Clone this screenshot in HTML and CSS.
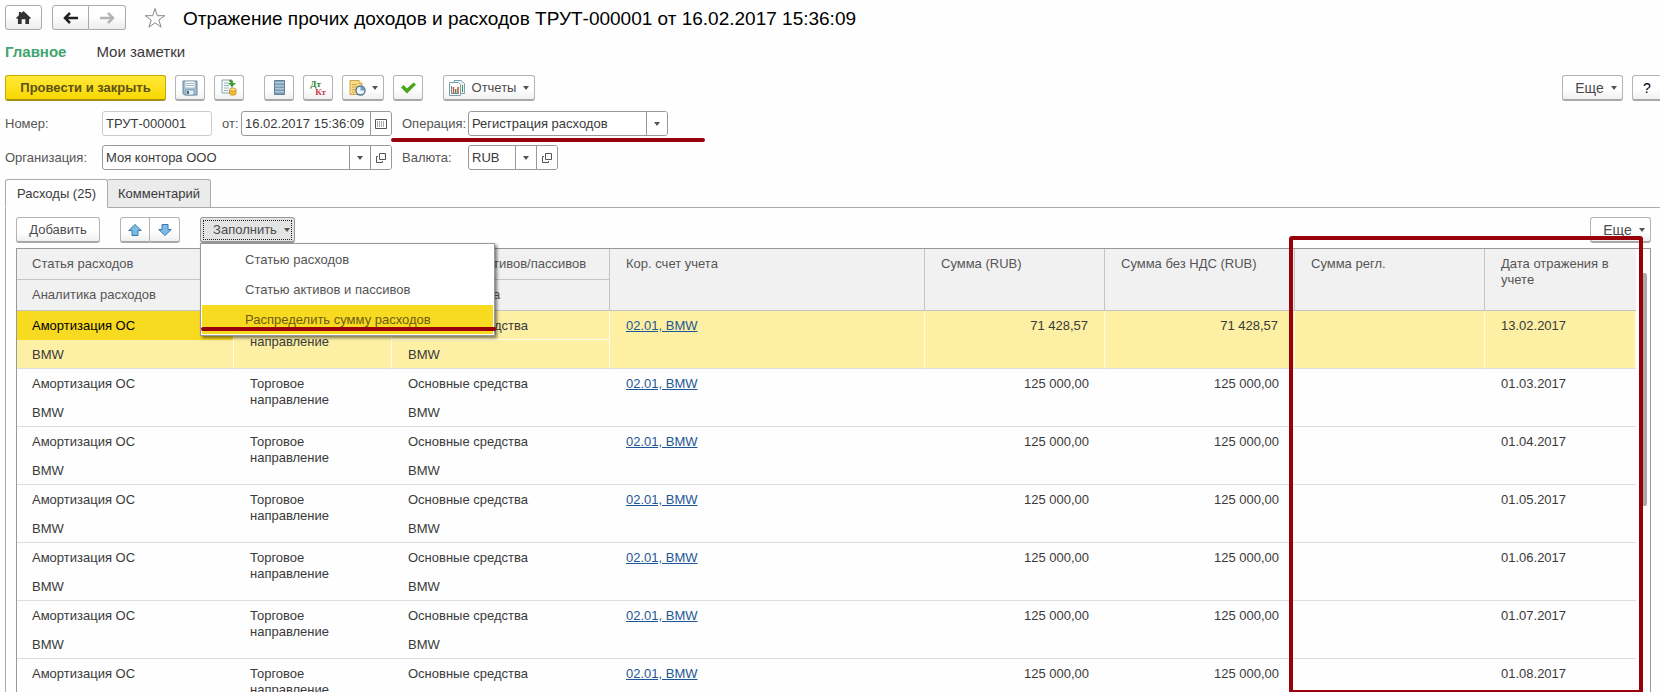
FILE: index.html
```html
<!DOCTYPE html>
<html lang="ru">
<head>
<meta charset="utf-8">
<title>Отражение прочих доходов и расходов</title>
<link rel="stylesheet" href="styles.css">
</head>
<body>
<svg class="sprite" aria-hidden="true">
  <symbol id="caret" viewBox="0 0 6 4"><path d="M0 0h6L3 4z" fill="#555"/></symbol>
  <symbol id="open" viewBox="0 0 10 10"><path d="M3.500.5h6v6h-6zM2 3.500H.5v6h6V8" fill="none" stroke="#555"/></symbol>
</svg>
<div class="app">
  <header class="titlebar">
    <button class="btn home" aria-label="Домой"><svg width="15" height="13" viewBox="0 0 16 14"><path d="M8 0l8 7.500-1 1L14 8v6h-4V9H6v5H2V8L1 8.500l-1-1L3 4.500V1h2.500v1.500z" fill="#333"/></svg></button>
    <div class="group nav">
      <button class="btn" aria-label="Назад"><svg width="15" height="12" viewBox="0 0 15 12"><path d="M15 6H3M7 1L2 6l5 5" fill="none" stroke="#222" stroke-width="2.500"/></svg></button>
      <button class="btn" aria-label="Вперед"><svg width="15" height="12" viewBox="0 0 15 12"><path d="M0 6h12M8 1l5 5-5 5" fill="none" stroke="#b4b4b4" stroke-width="2.500"/></svg></button>
    </div>
    <svg class="star" width="22" height="22" viewBox="0 0 22 22"><path d="M11 1.500l2.300 7.200h7.500l-6 4.300 2.300 7.200-6.100-4.500L4.900 20.200 7.200 13l-6-4.300h7.500z" fill="#fff" stroke="#888"/></svg>
    <h1>Отражение прочих доходов и расходов ТРУТ-000001 от 16.02.2017 15:36:09</h1>
  </header>

  <nav class="sections">
    <a class="current" href="#main">Главное</a>
    <a href="#notes">Мои заметки</a>
  </nav>

  <div class="commands">
    <button class="btn primary">Провести и закрыть</button>
    <button class="btn icon" aria-label="Записать"><svg width="16" height="16" viewBox="0 0 16 16"><path d="M1 1h14v14H2.500L1 13.500z" fill="#a4bfd0" stroke="#64869c"/><path d="M3.500 1.500h9v6h-9z" fill="#fff"/><path d="M4 3.500h8M4 5.500h8" stroke="#9bb4c4"/><path d="M4 10h8v5H4z" fill="#e3edf3" stroke="#64869c" stroke-width=".7"/><path d="M5 11h2v3H5z" fill="#466a84"/></svg></button>
    <button class="btn icon" aria-label="Провести"><svg width="16" height="17" viewBox="0 0 16 17"><path d="M1 1h10v13H1z" fill="#f8fbfc" stroke="#8aa2b0"/><path d="M3 4h4M3 6.500h5M3 9h5M3 11.500h4" stroke="#9ab0bc"/><path d="M8 .8c3 0 4.200 1 4.200 3.200H15l-4 4-4-4h2.500C9.500 3 9 2.500 8 2.500z" fill="#3e9c35"/><path d="M8.500 10.500v4c0 2.300 6.500 2.300 6.500 0v-4z" fill="#f0bd30" stroke="#b98715" stroke-width=".7"/><ellipse cx="11.800" cy="10.500" rx="3.200" ry="1.500" fill="#ffe285" stroke="#b98715" stroke-width=".7"/></svg></button>
    <button class="btn icon gap" aria-label="Движения"><svg width="11" height="15" viewBox="0 0 11 15"><path d="M.5.500h10v14H.5z" fill="#86a9c1" stroke="#5e8098"/><path d="M1 3h9M1 6h9M1 9h9M1 12h9" stroke="#d4e4ee"/><path d="M1 4h9M1 7h9M1 10h9M1 13h9" stroke="#5e8098" stroke-width=".6"/></svg></button>
    <button class="btn icon dtkt" aria-label="Дт Кт"><span class="dt">Дт</span><span class="kt">Кт</span></button>
    <button class="btn timed" aria-label="Создать на основании"><svg width="17" height="16" viewBox="0 0 17 16"><path d="M1 .5h9l3 3v11H1z" fill="#f9dd8a" stroke="#cfa64a"/><path d="M10 .5v3h3" fill="#fff3c8" stroke="#cfa64a"/><path d="M3 4.500h5M3 7h6M3 9.500h4M3 12h3" stroke="#cfa64a"/><circle cx="11.500" cy="10.500" r="4.500" fill="#eef5fb" stroke="#56748f" stroke-width="1.400"/><path d="M11.500 10.500V6.500a4 4 0 0 1 4 4z" fill="#6d9cc5"/></svg><svg class="caret"><use href="#caret"/></svg></button>
    <button class="btn icon" aria-label="Отметить"><svg width="15" height="12" viewBox="0 0 15 12"><path d="M0 5.500L2.500 3 6 6.500 12.500.5 15 2.500 6 11.500z" fill="#48a51c"/></svg></button>
    <button class="btn reports gap"><svg width="16" height="16" viewBox="0 0 16 16"><path d="M5 .5h7l3.500 3v10H5z" fill="#e9f3f5" stroke="#7ba2aa"/><path d="M.5 2.500h9l2 2v11H.5z" fill="#fff" stroke="#7ba2aa"/><path d="M2.500 6v7.500H10" fill="none" stroke="#6d8994"/><path d="M4.500 7v6" stroke="#d14c3e" stroke-width="1.500"/><path d="M6.700 9v4" stroke="#3b9a48" stroke-width="1.500"/><path d="M9 7v6" stroke="#c8473d" stroke-width="1.500"/><path d="M13.500 5v7" stroke="#3b9a48"/></svg>Отчеты<svg class="caret"><use href="#caret"/></svg></button>
    <button class="btn more push">Еще<svg class="caret"><use href="#caret"/></svg></button>
    <button class="btn icon help" aria-label="Справка">?</button>
  </div>

  <form class="fields">
    <div class="line">
      <label class="first" for="number">Номер:</label>
      <input class="box number" id="number" value="ТРУТ-000001" readonly>
      <label class="from" for="date">от:</label>
      <div class="box date"><input id="date" value="16.02.2017 15:36:09"><button type="button" aria-label="Календарь"><svg width="12" height="10" viewBox="0 0 12 10"><path d="M.5.500h11v9H.5z" fill="#fff" stroke="#555"/><path d="M2 3h8M2 5h8M2 7h8" stroke="#555" stroke-dasharray="1 1"/></svg></button></div>
      <label class="second" for="operation">Операция:</label>
      <div class="box operation"><select id="operation"><option>Регистрация расходов</option></select><span class="drop"><svg class="caret"><use href="#caret"/></svg></span></div>
    </div>
    <div class="line">
      <label class="first" for="org">Организация:</label>
      <div class="box org"><input id="org" value="Моя контора ООО"><button type="button" aria-label="Выбрать организацию"><svg class="caret"><use href="#caret"/></svg></button><button type="button" aria-label="Открыть организацию"><svg width="10" height="10"><use href="#open"/></svg></button></div>
      <label class="second" for="currency">Валюта:</label>
      <div class="box currency"><select id="currency"><option>RUB</option></select><span class="drop"><svg class="caret"><use href="#caret"/></svg></span><button type="button" aria-label="Открыть валюту"><svg width="10" height="10"><use href="#open"/></svg></button></div>
    </div>
    <div class="mark-line"></div>
  </form>

  <div class="tabs">
    <button class="tab active">Расходы (25)</button><button class="tab">Комментарий</button>
  </div>

  <main class="panel">
    <div class="commands inner">
      <button class="btn add">Добавить</button>
      <div class="group arrows">
        <button class="btn" aria-label="Вверх"><svg width="14" height="12" viewBox="0 0 14 12"><path d="M7 .5L13.300 6.500H10v5H4v-5H.7z" fill="#7cbbe8" stroke="#3a78a8"/></svg></button>
        <button class="btn" aria-label="Вниз"><svg width="14" height="12" viewBox="0 0 14 12"><path d="M7 11.500L13.300 5.500H10v-5H4v5H.7z" fill="#7cbbe8" stroke="#3a78a8"/></svg></button>
      </div>
      <div class="fill">
        <button class="btn pressed">Заполнить<svg class="caret"><use href="#caret"/></svg></button>
        <div class="menu">
          <button>Статью расходов</button>
          <button>Статью активов и пассивов</button>
          <button class="hot">Распределить сумму расходов</button>
          <div class="mark-menu"></div>
        </div>
      </div>
      <button class="btn more push">Еще<svg class="caret"><use href="#caret"/></svg></button>
    </div>

    <div class="grid">
      <div class="rows">
        <table>
          <colgroup><col class="c1"><col class="c2"><col class="c3"><col><col class="c5"><col class="c6"><col class="c7"><col class="c8"></colgroup>
          <thead>
            <tr><th>Статья расходов</th><th rowspan="2"></th><th>Кор. статья активов/пассивов</th><th rowspan="2">Кор. счет учета</th><th rowspan="2">Сумма (RUB)</th><th rowspan="2">Сумма без НДС (RUB)</th><th rowspan="2">Сумма регл.</th><th rowspan="2">Дата отражения в учете</th></tr>
            <tr><th>Аналитика расходов</th><th>Кор. аналитика</th></tr>
          </thead>
          <tbody class="selected">
            <tr><td class="cell">Амортизация ОС</td><td rowspan="2">Торговое направление</td><td class="upper">Основные средства</td><td rowspan="2"><a href="#a">02.01, BMW</a></td><td class="num" rowspan="2">71 428,57</td><td class="num" rowspan="2">71 428,57</td><td rowspan="2"></td><td rowspan="2">13.02.2017</td></tr>
            <tr><td>BMW</td><td>BMW</td></tr>
          </tbody>
          <tbody>
            <tr><td>Амортизация ОС</td><td rowspan="2">Торговое направление</td><td>Основные средства</td><td rowspan="2"><a href="#a">02.01, BMW</a></td><td class="num" rowspan="2">125 000,00</td><td class="num" rowspan="2">125 000,00</td><td rowspan="2"></td><td rowspan="2">01.03.2017</td></tr>
            <tr><td>BMW</td><td>BMW</td></tr>
          </tbody>
          <tbody>
            <tr><td>Амортизация ОС</td><td rowspan="2">Торговое направление</td><td>Основные средства</td><td rowspan="2"><a href="#a">02.01, BMW</a></td><td class="num" rowspan="2">125 000,00</td><td class="num" rowspan="2">125 000,00</td><td rowspan="2"></td><td rowspan="2">01.04.2017</td></tr>
            <tr><td>BMW</td><td>BMW</td></tr>
          </tbody>
          <tbody>
            <tr><td>Амортизация ОС</td><td rowspan="2">Торговое направление</td><td>Основные средства</td><td rowspan="2"><a href="#a">02.01, BMW</a></td><td class="num" rowspan="2">125 000,00</td><td class="num" rowspan="2">125 000,00</td><td rowspan="2"></td><td rowspan="2">01.05.2017</td></tr>
            <tr><td>BMW</td><td>BMW</td></tr>
          </tbody>
          <tbody>
            <tr><td>Амортизация ОС</td><td rowspan="2">Торговое направление</td><td>Основные средства</td><td rowspan="2"><a href="#a">02.01, BMW</a></td><td class="num" rowspan="2">125 000,00</td><td class="num" rowspan="2">125 000,00</td><td rowspan="2"></td><td rowspan="2">01.06.2017</td></tr>
            <tr><td>BMW</td><td>BMW</td></tr>
          </tbody>
          <tbody>
            <tr><td>Амортизация ОС</td><td rowspan="2">Торговое направление</td><td>Основные средства</td><td rowspan="2"><a href="#a">02.01, BMW</a></td><td class="num" rowspan="2">125 000,00</td><td class="num" rowspan="2">125 000,00</td><td rowspan="2"></td><td rowspan="2">01.07.2017</td></tr>
            <tr><td>BMW</td><td>BMW</td></tr>
          </tbody>
          <tbody>
            <tr><td>Амортизация ОС</td><td rowspan="2">Торговое направление</td><td>Основные средства</td><td rowspan="2"><a href="#a">02.01, BMW</a></td><td class="num" rowspan="2">125 000,00</td><td class="num" rowspan="2">125 000,00</td><td rowspan="2"></td><td rowspan="2">01.08.2017</td></tr>
            <tr><td></td><td></td></tr>
          </tbody>
        </table>
        <div class="scroll"><div class="thumb"></div></div>
      </div>
      <div class="mark-frame"></div>
    </div>
  </main>
</div>
</body>
</html>
```
FILE: styles.css
```css
* { box-sizing: border-box; }

body {
  margin: 0;
  background: #fefefe;
  color: #3a3a3a;
  font: 13px/16px "Liberation Sans", Arial, sans-serif;
}

button, input, select { font: inherit; color: inherit; }
.sprite { position: absolute; width: 0; height: 0; }

.app {
  display: flex;
  flex-direction: column;
  height: 100vh;
  overflow: hidden;
  padding-left: 5px;
}

/* Buttons */
.btn {
  display: flex;
  align-items: center;
  justify-content: center;
  height: 26px;
  padding: 0;
  border: 1px solid #b4b4b4;
  border-bottom: 2px solid #a8a8a8;
  border-radius: 3px;
  background: linear-gradient(#fff 55%, #f0f0f0);
  color: #4c4c4c;
}
.caret { width: 6px; height: 4px; flex: none; }
.icon { width: 30px; }
.group { display: flex; }
.group .btn:first-child { border-radius: 3px 0 0 3px; }
.group .btn:last-child { border-left: 0; border-radius: 0 3px 3px 0; }

/* Title */
.titlebar { display: flex; align-items: center; height: 25px; margin-top: 5px; }
.home { width: 37px; }
.nav { margin: 0 18px 0 10px; }
.nav .btn { width: 37px; }
.titlebar .btn { height: 25px; border: 1px solid #aaa; background: linear-gradient(#fff 40%, #ececec); }
.titlebar .nav .btn:last-child { border-left: 0; }
h1 { margin: 0 0 0 17px; color: #000; font-size: 19px; font-weight: 400; line-height: 24px; padding-top: 2px; white-space: nowrap; }

.sections { display: flex; gap: 30px; margin-top: 13px; font-size: 15px; line-height: 18px; }
.sections a { color: #3a3a3a; text-decoration: none; }
.sections .current { color: #40a56f; font-weight: 700; }

/* Commands */
.commands { display: flex; gap: 9px; margin-top: 14px; }
.commands .gap { margin-left: 11px; }
.commands .push { margin-left: auto; }
.primary {
  width: 161px;
  border-color: #c8a800;
  border-bottom-color: #a89010;
  background: linear-gradient(#ffe93a, #f8d800);
  color: #5e5114;
  font-weight: 700;
}
.dtkt { flex-direction: column; font: 700 9px/8px "Liberation Serif", serif; }
.dt { color: #2d7d2d; padding-right: 5px; }
.kt { color: #cc3c48; padding-left: 5px; }
.timed { width: 42px; gap: 6px; }
.reports { width: 92px; gap: 7px; }
.more { width: 61px; gap: 7px; padding-left: 7px; font-size: 14px; }
.help { margin-right: -2px; color: #000; font-size: 14px; }

/* Fields */
.fields { position: relative; display: flex; flex-direction: column; gap: 9px; margin-top: 10px; }
.line { display: flex; align-items: center; }
.line label { color: #555; }
.first { width: 97px; }
.from { width: 29px; padding-left: 10px; }
.second { width: 76px; padding-left: 10px; }
.box {
  display: flex;
  height: 25px;
  border: 1px solid #999;
  border-radius: 3px;
  background: #fff;
  overflow: hidden;
}
.box input, .box select {
  flex: 1;
  min-width: 0;
  padding: 0 0 0 3px;
  border: 0;
  outline: 0;
  background: none;
  appearance: none;
}
.box button, .drop {
  display: flex;
  align-items: center;
  justify-content: center;
  width: 21px;
  padding: 0;
  border: 0;
  border-left: 1px solid #999;
  background: #fff;
}
.number { width: 110px; padding: 0 3px; border-color: #ccc; outline: 0; }
.date { width: 151px; }
.operation { width: 200px; }
.org { width: 290px; }
.currency { width: 90px; }
.mark-line { position: absolute; left: 386px; top: 27px; width: 314px; height: 4px; border-radius: 2px; background: #98000a; }

/* Tabs */
.tabs { display: flex; height: 29px; margin-top: 9px; border-bottom: 1px solid #aaa; }
.tab {
  width: 103px;
  height: 29px;
  padding: 0;
  border: 1px solid #aaa;
  border-left: 0;
  border-radius: 0 3px 0 0;
  background: #ebebeb;
}
.tab.active { border-left: 1px solid #aaa; border-bottom-color: #fefefe; border-radius: 3px 3px 0 0; background: #fefefe; }

.panel {
  display: flex;
  flex: 1;
  flex-direction: column;
  min-height: 0;
  padding: 9px 9px 0 10px;
  border-left: 1px solid #aaa;
}
.inner { gap: 20px; margin: 0; }
.add { width: 84px; }
.arrows .btn { width: 30px; }
.fill { position: relative; z-index: 2; }
.pressed {
  width: 95px;
  gap: 7px;
  padding-left: 8px;
  border-color: #999;
  background: #e4e4e4;
  outline: 1px dotted #222;
  outline-offset: -4px;
}

/* Drop-down menu */
.menu {
  position: absolute;
  left: 0;
  top: 26px;
  width: 295px;
  padding: 1px;
  border: 1px solid #999;
  background: #fff;
  box-shadow: 2px 2px 3px rgba(0, 0, 0, .5);
}
.menu button {
  display: block;
  width: 100%;
  height: 29px;
  margin-bottom: 1px;
  padding: 0 0 0 43px;
  border: 0;
  background: none;
  color: #555;
  text-align: left;
}
.menu .hot { margin: 0; background: #f8da20; color: #6b5a10; }
.mark-menu { position: absolute; left: 0; right: -2px; bottom: 4px; height: 4px; border-radius: 2px; background: #98000a; }

/* Table */
.grid { position: relative; flex: 1; min-height: 0; margin-top: 5px; }
.rows { display: flex; height: 100%; overflow: hidden; border: solid #999; border-width: 1px 1px 0; }
table { flex: 1; width: 100%; height: max-content; table-layout: fixed; border-collapse: separate; border-spacing: 0; }
.c1 { width: 217px; }
.c2 { width: 158px; }
.c3 { width: 218px; }
.c5 { width: 180px; }
.c6 { width: 190px; }
.c7 { width: 190px; }
.c8 { width: 151px; }
th, td { height: 29px; padding: 7px 16px 0; text-align: left; vertical-align: top; font-weight: 400; }
th:first-child, td:first-child { padding-left: 15px; }
th {
  height: 31px;
  border-right: 1px solid #c4c4c4;
  border-bottom: 1px solid #c4c4c4;
  background: #f2f1f2;
  color: #555;
  white-space: nowrap;
}
th:last-child { padding-right: 8px; white-space: normal; }
tr:first-child th:last-child { border-right: 0; }
tbody tr:last-child td, td[rowspan] { border-bottom: 1px solid #ddd; }
.selected td { border-right: 1px solid #fffbe6; background: #fdf0a4; }
.selected .cell { background: #f8da20; color: #000; }
.selected .upper { border-bottom: 1px solid #fffbe6; }
.num { text-align: right; }
a { color: #1f5796; }

.scroll { width: 14px; padding: 24px 3px 0 4px; }
.thumb { height: 233px; border-radius: 2px; background: #aaa; }
.mark-frame { position: absolute; top: -12px; right: 8px; bottom: -2px; width: 354px; border: 4px solid #98000a; border-radius: 3px; }
```
